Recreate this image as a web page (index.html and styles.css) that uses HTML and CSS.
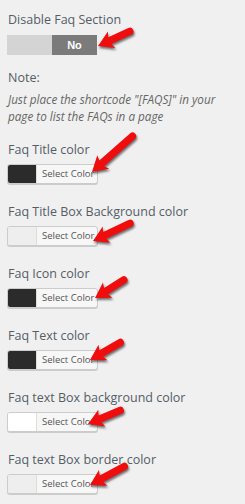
FILE: index.html
```html
<!DOCTYPE html>
<html lang="en">
<head>
    <meta charset="UTF-8">
    <meta name="viewport" content="width=device-width, initial-scale=1.0">
    <title>FAQ Settings</title>
    <link rel="stylesheet" href="styles.css">
</head>
<body>

    <div class="settings">
        <div class="field field-toggle">
            <label class="field-label">Disable Faq Section</label>
            <div class="control">
                <div class="toggle">
                    <span class="toggle-off"></span>
                    <span class="toggle-on">No</span>
                </div>
                <svg class="arrow" width="1" height="1"><path transform="translate(91 11) rotate(-24.6)" d="M0 0 L15 -9 L13 -3.7 L35 -3.7 A3.7 3.7 0 0 1 35 3.7 L13 3.7 L15 9 Z"/></svg>
            </div>
        </div>

        <div class="note">
            <div class="note-title">Note:</div>
            <p class="note-text">Just place the shortcode "[FAQS]" in your page to list the FAQs in a page</p>
        </div>

        <div class="field">
            <label class="field-label">Faq Title color</label>
            <div class="control">
                <button class="color-btn" type="button"><span class="swatch swatch-dark"></span><span class="color-text">Select Color</span></button>
                <svg class="arrow" width="1" height="1"><path transform="translate(85 8) rotate(-41.5)" d="M0 0 L15 -9 L13 -3.7 L54 -3.7 A3.7 3.7 0 0 1 54 3.7 L13 3.7 L15 9 Z"/></svg>
            </div>
        </div>

        <div class="field">
            <label class="field-label">Faq Title Box Background color</label>
            <div class="control">
                <button class="color-btn" type="button"><span class="swatch swatch-light"></span><span class="color-text">Select Color</span></button>
                <svg class="arrow" width="1" height="1"><path transform="translate(86 15) rotate(-25.4)" d="M0 0 L15 -9 L13 -3.7 L41 -3.7 A3.7 3.7 0 0 1 41 3.7 L13 3.7 L15 9 Z"/></svg>
            </div>
        </div>

        <div class="field">
            <label class="field-label">Faq Icon color</label>
            <div class="control">
                <button class="color-btn" type="button"><span class="swatch swatch-dark"></span><span class="color-text">Select Color</span></button>
                <svg class="arrow" width="1" height="1"><path transform="translate(88 10) rotate(-32)" d="M0 0 L15 -9 L13 -3.7 L34 -3.7 A3.7 3.7 0 0 1 34 3.7 L13 3.7 L15 9 Z"/></svg>
            </div>
        </div>

        <div class="field">
            <label class="field-label">Faq Text color</label>
            <div class="control">
                <button class="color-btn" type="button"><span class="swatch swatch-dark"></span><span class="color-text">Select Color</span></button>
                <svg class="arrow" width="1" height="1"><path transform="translate(83 10) rotate(-30)" d="M0 0 L15 -9 L13 -3.7 L35 -3.7 A3.7 3.7 0 0 1 35 3.7 L13 3.7 L15 9 Z"/></svg>
            </div>
        </div>

        <div class="field">
            <label class="field-label">Faq text Box background color</label>
            <div class="control">
                <button class="color-btn" type="button"><span class="swatch swatch-white"></span><span class="color-text">Select Color</span></button>
                <svg class="arrow" width="1" height="1"><path transform="translate(81 12) rotate(-23)" d="M0 0 L15 -9 L13 -3.7 L35 -3.7 A3.7 3.7 0 0 1 35 3.7 L13 3.7 L15 9 Z"/></svg>
            </div>
        </div>

        <div class="field">
            <label class="field-label">Faq text Box border color</label>
            <div class="control">
                <button class="color-btn" type="button"><span class="swatch swatch-light"></span><span class="color-text">Select Color</span></button>
                <svg class="arrow" width="1" height="1"><path transform="translate(83 11) rotate(-28.4)" d="M0 0 L15 -9 L13 -3.7 L39 -3.7 A3.7 3.7 0 0 1 39 3.7 L13 3.7 L15 9 Z"/></svg>
            </div>
        </div>
    </div>

</body>
</html>
```

FILE: styles.css
```css
body {
    margin: 0;
    background-color: #f0f0f0;
    font-family: "Open Sans", Arial, sans-serif;
    color: #555d66;
}
.settings {
    padding: 11px 7px 0 7px;
}
.field {
    margin-bottom: 19px;
}
.field-label {
    display: block;
    font-size: 12.5px;
    line-height: 18px;
    margin-bottom: 5px;
    padding-left: 1px;
}
.field-toggle {
    margin-bottom: 14px;
}
.field-toggle .field-label {
    margin-bottom: 6px;
}
.control {
    position: relative;
}
.toggle {
    display: flex;
    width: 90px;
    height: 20px;
}
.toggle-off {
    flex: 1;
    background-color: #d4d4d4;
}
.toggle-on {
    flex: 1;
    background-color: #7b7b7b;
    color: #ffffff;
    font-family: Arial, sans-serif;
    font-weight: bold;
    font-size: 11px;
    line-height: 20px;
    text-align: center;
}
.note {
    margin-bottom: 16px;
}
.note-title {
    font-size: 12.5px;
    line-height: 18px;
    padding-left: 1px;
}
.note-text {
    margin: 4px 0 0 0;
    max-width: 220px;
    font-size: 11.7px;
    line-height: 17px;
    font-style: italic;
    color: #666;
    padding-left: 1px;
}
.color-btn {
    display: flex;
    align-items: stretch;
    width: 91px;
    height: 20px;
    padding: 0;
    border: 1px solid #cccccc;
    border-radius: 3px;
    background-color: #f7f7f7;
    box-shadow: 0 1px 0 #cccccc;
    overflow: hidden;
    cursor: pointer;
}
.swatch {
    width: 28px;
    border-right: 1px solid #dddddd;
}
.swatch-dark {
    background-color: #2b2b2b;
}
.swatch-light {
    background-color: #eeeeee;
}
.swatch-white {
    background-color: #ffffff;
}
.color-text {
    padding-left: 5px;
    font-family: "Open Sans", Arial, sans-serif;
    font-size: 9.5px;
    line-height: 18px;
    color: #555;
    white-space: nowrap;
}
.arrow {
    position: absolute;
    left: 0;
    top: 0;
    overflow: visible;
    filter: drop-shadow(1px 2px 1px rgba(0, 0, 0, 0.55));
}
.arrow path {
    fill: #f00d0d;
}
```
